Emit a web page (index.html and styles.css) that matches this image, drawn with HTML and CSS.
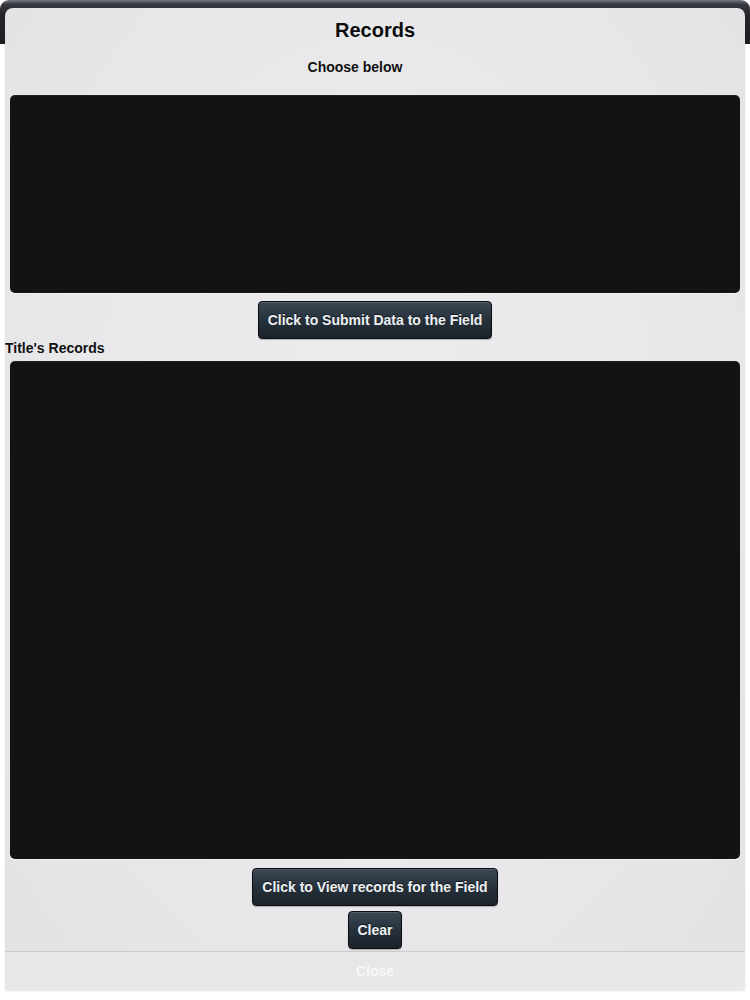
FILE: index.html
```html
<!DOCTYPE html>
<html lang="en">
<head>
<meta charset="utf-8">
<title>Records</title>
<link rel="stylesheet" href="styles.css">
</head>
<body>
<div class="frame">
  <div class="panel">
    <h1 class="title">Records</h1>
    <p class="subtitle">Choose below</p>
    <div class="box box-choose"></div>
    <div class="btn-row"><button class="btn">Click to Submit Data to the Field</button></div>
    <p class="label">Title's Records</p>
    <div class="box box-records"></div>
    <div class="btn-row btn-row-view"><button class="btn">Click to View records for the Field</button></div>
    <div class="btn-row btn-row-clear"><button class="btn btn-small">Clear</button></div>
    <div class="footer"><span class="close">Close</span></div>
  </div>
</div>
</body>
</html>
```

FILE: styles.css
```css
html, body {
  margin: 0;
  padding: 0;
  background: #ffffff;
}

body {
  width: 750px;
  height: 1000px;
  overflow: hidden;
  font-family: "Liberation Sans", Arial, sans-serif;
}

.frame {
  padding: 8px 5px 0;
  border-radius: 9px 9px 0 0;
  background: linear-gradient(#767883 0, #3a3b42 4px, #26272c 14px, #1d1e22 44px) no-repeat top left / 100% 44px;
}

.panel {
  height: 982px;
  box-sizing: border-box;
  display: flex;
  flex-direction: column;
  background:
    radial-gradient(ellipse at 50% 45%, #ececee 0%, #e8e8ea 60%, #e2e2e4 100%);
  border-radius: 8px 8px 2px 2px;
  box-shadow: 0 1px 2px rgba(0, 0, 0, 0.12);
}

.title {
  margin: 0;
  padding-top: 10px;
  font-size: 20px;
  line-height: 24px;
  font-weight: bold;
  text-align: center;
  color: #0c0c0c;
}

.subtitle {
  margin: 16px 0 0;
  padding-right: 40px;
  font-size: 14px;
  line-height: 18px;
  font-weight: bold;
  text-align: center;
  color: #111;
}

.box {
  margin: 0 5px;
  background: #131316;
  border-radius: 5px;
  box-shadow: inset 0 1px 0 rgba(255, 255, 255, 0.06), 0 1px 0 rgba(255, 255, 255, 0.5);
}

.box-choose {
  margin-top: 19px;
  height: 199px;
}

.box-records {
  margin-top: 5px;
  height: 499px;
}

.btn-row {
  display: flex;
  justify-content: center;
  margin-top: 8px;
}

.btn-row-view {
  margin-top: 9px;
}

.btn-row-clear {
  margin-top: 5px;
}

.btn {
  height: 38px;
  padding: 0 9px;
  font-family: "Liberation Sans", Arial, sans-serif;
  font-size: 14px;
  font-weight: bold;
  color: #eef1f4;
  text-shadow: 0 -1px 0 rgba(0, 0, 0, 0.6);
  background: linear-gradient(#3a4754 0%, #26313b 50%, #1b232b 100%);
  border: 1px solid #0b0e11;
  border-radius: 4px;
  box-shadow: inset 0 1px 0 rgba(255, 255, 255, 0.12), 0 1px 1px rgba(0, 0, 0, 0.25);
  cursor: pointer;
}

.btn-small {
  padding: 0 8px;
}

.label {
  margin: 1px 0 0;
  font-size: 14px;
  line-height: 16px;
  font-weight: bold;
  color: #111;
}

.footer {
  margin-top: 2px;
  height: 38px;
  display: flex;
  align-items: center;
  justify-content: center;
  border-top: 1px solid #cbcbcd;
  background: linear-gradient(#e6e6e8, #e9e9eb);
}

.close {
  font-size: 14px;
  font-weight: bold;
  color: #f7f7f8;
}
```
